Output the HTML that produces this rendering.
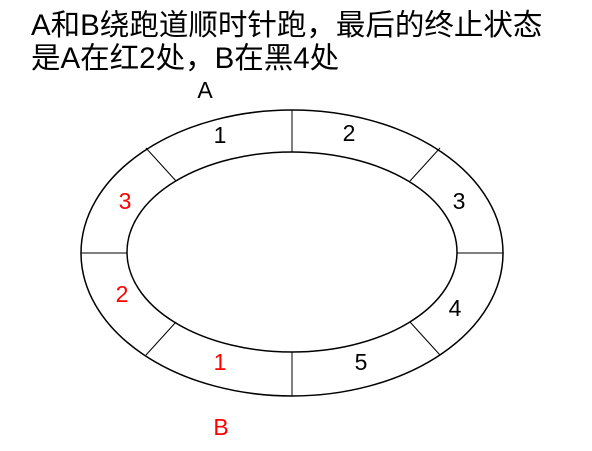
<!DOCTYPE html>
<html><head><meta charset="utf-8"><style>
body{margin:0;width:592px;height:451px;background:#fff;overflow:hidden;position:relative;font-family:"Liberation Sans","Noto Sans CJK SC",sans-serif}
.t{position:absolute;left:31px;top:9px;font-size:29.5px;line-height:33px;color:#000;white-space:nowrap;letter-spacing:0px}
svg{position:absolute;left:0;top:0}
</style></head><body>
<div class="t">A和B绕跑道顺时针跑，最后的终止状态<br>是A在红2处，B在黑4处</div>
<svg width="592" height="451" font-family="Liberation Sans, sans-serif" font-size="23">
<g fill="none" stroke="#000" stroke-width="1.5">
<ellipse cx="292" cy="253" rx="211" ry="143"/>
<ellipse cx="292" cy="252" rx="165" ry="100"/>
</g>
<g stroke="#000" stroke-width="1">
<line x1="292" y1="110" x2="292" y2="152"/>
<line x1="292" y1="352" x2="292" y2="396"/>
<line x1="81" y1="253" x2="127" y2="253"/>
<line x1="457" y1="253" x2="503" y2="253"/>
<line x1="146" y1="148" x2="176" y2="181"/>
<line x1="410" y1="181" x2="440" y2="148"/>
<line x1="410" y1="322" x2="440" y2="355"/>
<line x1="146" y1="355" x2="176" y2="322"/>
</g>
<g text-anchor="middle">
<text x="205" y="98">A</text>
<text x="220" y="143">1</text>
<text x="349" y="141">2</text>
<text x="125" y="209" fill="#f00">3</text>
<text x="459" y="209">3</text>
<text x="122" y="302" fill="#f00">2</text>
<text x="455" y="316">4</text>
<text x="220" y="370" fill="#f00">1</text>
<text x="361" y="370">5</text>
<text x="221" y="435" fill="#f00">B</text>
</g>
</svg>
</body></html>
